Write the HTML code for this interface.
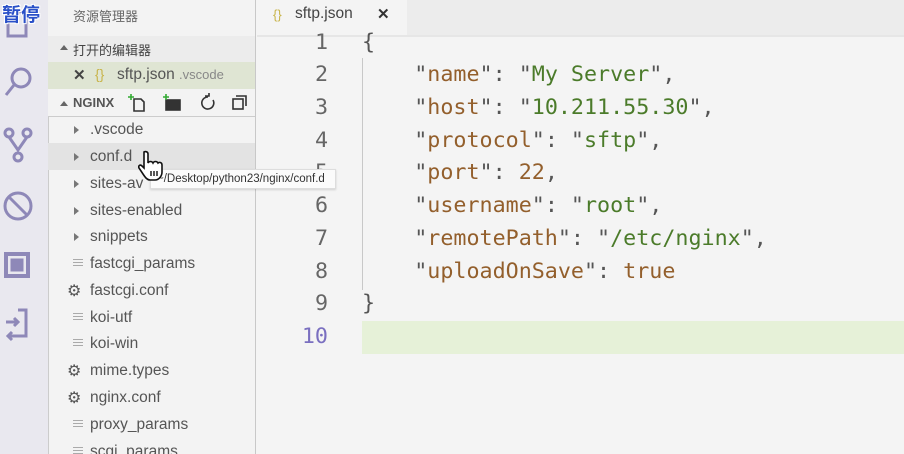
<!DOCTYPE html>
<html><head><meta charset="utf-8"><style>
*{margin:0;padding:0;box-sizing:border-box}
html,body{width:904px;height:454px;overflow:hidden}
body{background:#f4f4f4;font-family:"Liberation Sans","Noto Sans CJK SC",sans-serif;position:relative}
.abs{position:absolute}
#act{left:0;top:0;width:48px;height:454px;background:#e9e8ef}
#side{left:48px;top:0;width:208px;height:454px;background:#f3f3f3;border-right:1px solid #c8c8c8}
.row{position:absolute;left:0;width:207px;height:27px;font-size:15.5px;color:#555;line-height:27px;white-space:nowrap}
.row .t{position:absolute;left:42px}
.tri{position:absolute;left:26px;top:10px;width:0;height:0;border-left:5px solid #777;border-top:4px solid transparent;border-bottom:4px solid transparent}
.lines{position:absolute;left:25px;top:9px;width:10px}
.lines i{display:block;height:1px;background:#aaa;margin-bottom:2px}
.gear{position:absolute;left:19px;top:1px;font-size:16px;color:#555}
#code{font-family:"DejaVu Sans Mono","Liberation Mono",monospace;font-size:21.7px}
.ln{position:absolute;right:576px;width:60px;text-align:right;color:#666}
.cl{position:absolute;left:362px;white-space:pre;color:#555}
.k{color:#935f2c}.s{color:#4b7b2a}
</style></head><body>
<div id="act" class="abs">
 <svg width="48" height="360" viewBox="0 0 48 360" style="position:absolute;left:0;top:0" fill="none" stroke="#8e88b8" stroke-width="3">
  <rect x="8" y="12" width="18" height="24"/>
  <circle cx="21" cy="78" r="9"/><line x1="14" y1="85" x2="6" y2="95"/>
  <circle cx="9" cy="133" r="4"/><circle cx="27" cy="133" r="4"/><circle cx="18" cy="157" r="4"/><path d="M9 137 L18 150 L27 137"/>
  <circle cx="18" cy="206" r="13"/><line x1="9" y1="197" x2="27" y2="215"/>
  <rect x="6" y="254" width="22" height="22" stroke-width="4"/><rect x="12" y="260" width="10" height="10" fill="#8e88b8"/>
  <path d="M6 322 h12 M14 318 l4 4 -4 4 M18 310 h8 v26 h-8 M20 336 h-12 M12 332 l-4 4 4 4"/>
 </svg>
 <div class="abs" style="left:2px;top:0;font-size:19px;font-weight:bold;color:#2a50c8;text-shadow:-1px -1px 0 #fff,1px -1px 0 #fff,-1px 1px 0 #fff,1px 1px 0 #fff">暂停</div>
</div>
<div id="side" class="abs">
 <div class="abs" style="left:25px;top:6px;font-size:13px;color:#666">资源管理器</div>
 <div class="abs" style="left:0;top:36px;width:207px;height:26px;background:#ececec"></div>
 <div class="abs" style="left:12px;top:45px;border-left:4px solid transparent;border-right:4px solid transparent;border-bottom:5px solid #666"></div>
 <div class="abs" style="left:25px;top:40px;font-size:13px;color:#444">打开的编辑器</div>
 <div class="abs" style="left:0;top:62px;width:207px;height:27px;background:#dfe5d3"></div>
 <div class="abs" style="left:25px;top:66px;font-size:15px;color:#444;font-weight:bold">✕</div>
 <div class="abs" style="left:47px;top:66px;font-size:14px;color:#c8b44a">{}</div>
 <div class="abs" style="left:69px;top:66px;font-size:15.5px;color:#555">sftp.json <span style="font-size:13px;color:#888">.vscode</span></div>
 <div class="abs" style="left:12px;top:101px;border-left:4px solid transparent;border-right:4px solid transparent;border-bottom:5px solid #666"></div>
 <div class="abs" style="left:25px;top:95px;font-size:13px;color:#555;font-weight:bold">NGINX</div>
 <svg class="abs" style="left:80px;top:93px" width="125" height="20" fill="none" stroke="#333" stroke-width="1.6">
  <path d="M6 6 h7 l3 3 v9 h-10 z"/><path d="M3 1 v6 M0 4 h6" stroke="#3a3"/>
  <rect x="38" y="7" width="14" height="10" fill="#333"/><path d="M38 1 v6 M35 4 h6" stroke="#3a3"/>
  <path d="M80 4 a6 6 0 1 0 5 3"/><path d="M77 3 h4 v-4" />
  <rect x="105" y="6" width="10" height="10"/><path d="M108 3 h10 v10"/>
 </svg>
 <div class="abs" style="left:0;top:116px;width:207px;height:338px;border-top:1px solid #ccc;border-left:1px solid #ccc"></div>
 <div class="row" style="top:116px"><span class="tri"></span><span class="t">.vscode</span></div>
 <div class="row" style="top:143px;background:#e3e3e3"><span class="tri"></span><span class="t">conf.d</span></div>
 <div class="row" style="top:170px"><span class="tri"></span><span class="t">sites-av</span></div>
 <div class="row" style="top:197px"><span class="tri"></span><span class="t">sites-enabled</span></div>
 <div class="row" style="top:223px"><span class="tri"></span><span class="t">snippets</span></div>
 <div class="row" style="top:250px"><span class="lines"><i></i><i></i><i></i></span><span class="t">fastcgi_params</span></div>
 <div class="row" style="top:277px"><span class="gear">⚙</span><span class="t">fastcgi.conf</span></div>
 <div class="row" style="top:304px"><span class="lines"><i></i><i></i><i></i></span><span class="t">koi-utf</span></div>
 <div class="row" style="top:330px"><span class="lines"><i></i><i></i><i></i></span><span class="t">koi-win</span></div>
 <div class="row" style="top:357px"><span class="gear">⚙</span><span class="t">mime.types</span></div>
 <div class="row" style="top:384px"><span class="gear">⚙</span><span class="t">nginx.conf</span></div>
 <div class="row" style="top:411px"><span class="lines"><i></i><i></i><i></i></span><span class="t">proxy_params</span></div>
 <div class="row" style="top:438px"><span class="lines"><i></i><i></i><i></i></span><span class="t">scgi_params</span></div>
</div>
<div class="abs" style="left:257px;top:0;width:647px;height:36px;background:#ececec"></div>
<div class="abs" style="left:257px;top:0;width:150px;height:36px;background:#f4f4f4"></div>
<div class="abs" style="left:273px;top:7px;font-size:13px;color:#c8b44a">{}</div>
<div class="abs" style="left:295px;top:5px;font-size:15.5px;color:#444">sftp.json</div>
<div class="abs" style="left:377px;top:5px;font-size:15px;color:#333;font-weight:bold">✕</div>
<div class="abs" style="left:257px;top:35px;width:647px;height:2px;background:#e6e6e6"></div>
<div class="abs" style="left:362px;top:321px;width:542px;height:33px;background:#e6f1d8"></div>
<div class="abs" style="left:362px;top:58px;width:1px;height:232px;background:#c8c8c8"></div>
<div id="code">
 <div class="ln" style="top:30px">1</div><div class="ln" style="top:62px">2</div><div class="ln" style="top:95px">3</div><div class="ln" style="top:128px">4</div><div class="ln" style="top:160px">5</div><div class="ln" style="top:193px">6</div><div class="ln" style="top:226px">7</div><div class="ln" style="top:259px">8</div><div class="ln" style="top:291px">9</div><div class="ln" style="top:324px;color:#7a6fc0">10</div>
 <div class="cl" style="top:30px">{</div>
 <div class="cl" style="top:62px">    "<span class="k">name</span>": "<span class="s">My Server</span>",</div>
 <div class="cl" style="top:95px">    "<span class="k">host</span>": "<span class="s">10.211.55.30</span>",</div>
 <div class="cl" style="top:128px">    "<span class="k">protocol</span>": "<span class="s">sftp</span>",</div>
 <div class="cl" style="top:160px">    "<span class="k">port</span>": <span class="k">22</span>,</div>
 <div class="cl" style="top:193px">    "<span class="k">username</span>": "<span class="s">root</span>",</div>
 <div class="cl" style="top:226px">    "<span class="k">remotePath</span>": "<span class="s">/etc/nginx</span>",</div>
 <div class="cl" style="top:259px">    "<span class="k">uploadOnSave</span>": <span class="k">true</span></div>
 <div class="cl" style="top:291px">}</div>
</div>
<div class="abs" style="left:150px;top:169px;width:186px;height:20px;background:#fbfbfb;border:1px solid #ddd;box-shadow:0 1px 2px rgba(0,0,0,.15);font-size:11.5px;color:#333;line-height:18px;padding-left:6px;white-space:nowrap">~/Desktop/python23/nginx/conf.d</div>
<svg class="abs" style="left:138px;top:150px" width="28" height="32" viewBox="0 0 28 32">
 <path d="M6 2 c2-1 4 0 4 2 v9 c1-2 4-2 5 0 c1-2 4-2 5 0 c1-1 4-1 4 2 v7 c0 4-3 8-7 8 h-5 c-3 0-5-3-7-6 l-4-6 c-1-2 1-4 3-2 l2 2 v-14 z" fill="#fff" stroke="#111" stroke-width="1.6"/>
 <path d="M13 21 v5 M16 21 v5 M19 21 v5" stroke="#111" stroke-width="1.4"/>
</svg>
</body></html>
